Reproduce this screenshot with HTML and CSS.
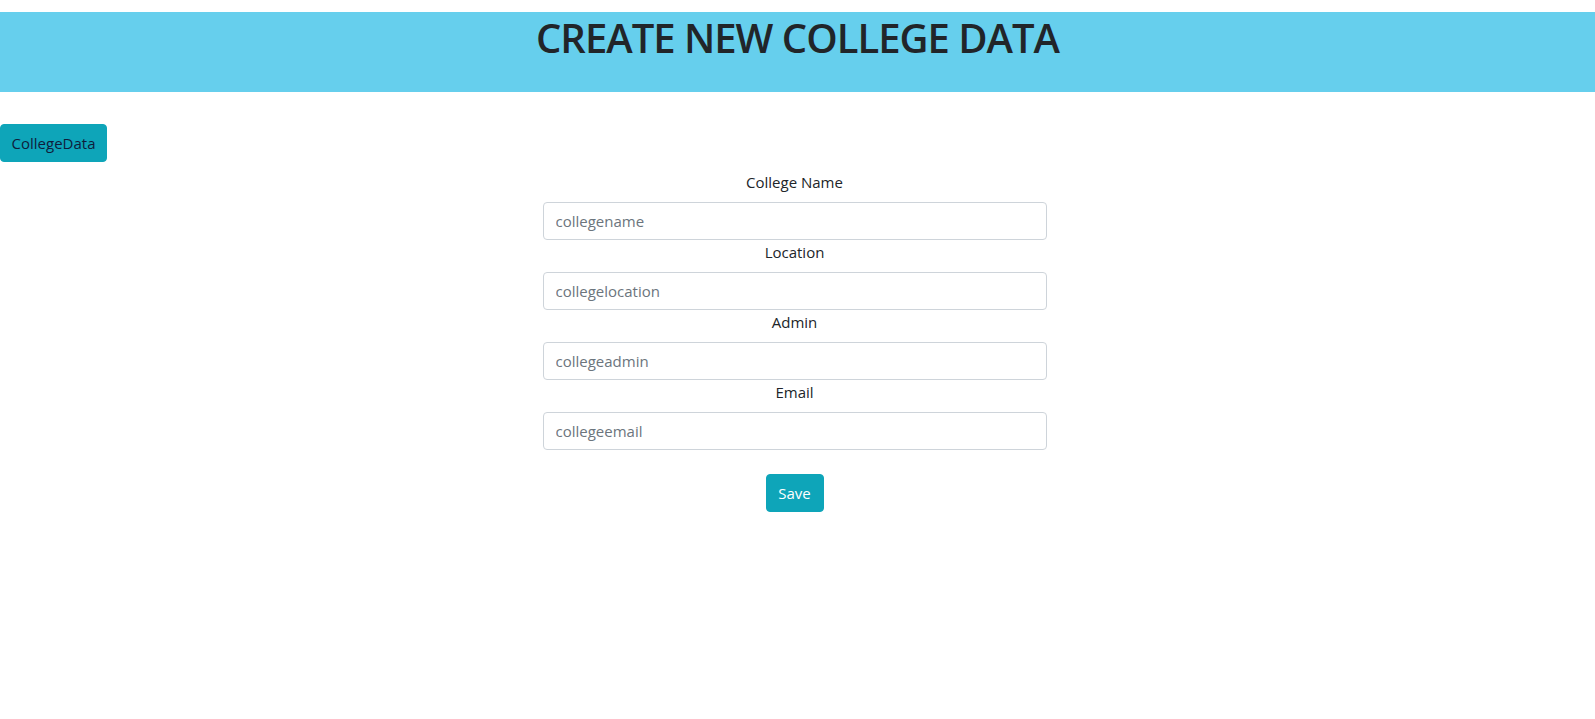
FILE: index.html
```html
<!DOCTYPE html>
<html lang="en">
<head>
<meta charset="utf-8">
<title>Create New College Data</title>
<link rel="stylesheet" href="styles.css">
</head>
<body>
<header class="banner">
  <h1 class="banner-title">CREATE NEW COLLEGE DATA</h1>
</header>
<div class="toolbar">
  <a class="btn btn-nav" href="#">CollegeData</a>
</div>
<form class="college-form">
  <label class="field-label" for="cname">College Name</label>
  <input class="field-input" id="cname" type="text" placeholder="collegename">
  <label class="field-label" for="cloc">Location</label>
  <input class="field-input" id="cloc" type="text" placeholder="collegelocation">
  <label class="field-label" for="cadmin">Admin</label>
  <input class="field-input" id="cadmin" type="text" placeholder="collegeadmin">
  <label class="field-label" for="cemail">Email</label>
  <input class="field-input" id="cemail" type="text" placeholder="collegeemail">
  <div class="actions">
    <button class="btn btn-save" type="button">Save</button>
  </div>
</form>
</body>
</html>
```

FILE: styles.css
```css
* { box-sizing: border-box; }
html, body { margin: 0; padding: 0; }
body {
  font-family: "Open Sans", "Noto Sans", sans-serif;
  font-size: 15px;
  line-height: 24px;
  color: #212529;
  background: #fff;
}
.banner {
  margin-top: 12px;
  height: 80px;
  background: #66cfed;
  text-align: center;
  padding-top: 1px;
}
.banner-title {
  margin: 0;
  font-size: 40px;
  line-height: 50px;
  font-weight: 600;
  color: #212529;
  letter-spacing: -1px;
}
.toolbar {
  margin-top: 32px;
  display: flex;
}
.btn {
  display: inline-flex;
  align-items: center;
  justify-content: center;
  height: 38px;
  padding: 0 12px;
  border: 1px solid #0ea5b9;
  border-radius: 4px;
  background: #0ea5b9;
  font-family: inherit;
  font-size: 15px;
  text-decoration: none;
}
.btn-nav {
  width: 107px;
  color: #0f1d3c;
}
.college-form {
  width: 504px;
  margin-left: calc(50% - 255px);
  margin-top: 8px;
  display: flex;
  flex-direction: column;
}
.field-label {
  display: block;
  text-align: center;
  height: 24px;
  margin-bottom: 8px;
}
.field-input {
  display: block;
  width: 100%;
  height: 38px;
  padding: 0 12px;
  border: 1px solid #ced4da;
  border-radius: 4px;
  font-family: inherit;
  font-size: 15px;
  color: #495057;
  background: #fff;
}
.field-input::placeholder { color: #6c757d; opacity: 1; }
.actions {
  display: flex;
  justify-content: center;
  margin-top: 24px;
}
.btn-save {
  width: 58px;
  color: #fff;
  cursor: pointer;
}
```
